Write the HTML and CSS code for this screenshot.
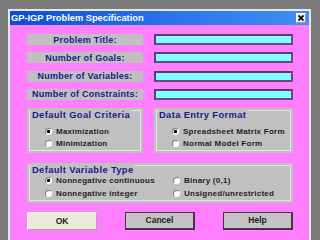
FILE: index.html
```html
<!DOCTYPE html>
<html lang="en">

<head>
    <meta charset="UTF-8">
    <title>GP-IGP Problem Specification</title>
    <link rel="stylesheet" href="styles.css">
</head>

<body>
    <div class="dialog">
        <div class="titlebar">
            <span class="title">GP-IGP Problem Specification</span>
            <button class="close" type="button">
                <svg width="6" height="6" viewBox="0 0 6 6">
                    <path d="M0.5 0.5 L5.5 5.5 M5.5 0.5 L0.5 5.5" stroke="#000" stroke-width="1.8" />
                </svg>
            </button>
        </div>

        <form class="content">
            <div class="fields">
                <label class="caption" for="title">Problem Title:</label>
                <input class="entry" id="title" type="text">

                <label class="caption" for="goals">Number of Goals:</label>
                <input class="entry" id="goals" type="text">

                <label class="caption" for="vars">Number of Variables:</label>
                <input class="entry" id="vars" type="text">

                <label class="caption" for="cons">Number of Constraints:</label>
                <input class="entry" id="cons" type="text">
            </div>

            <div class="groups">
                <fieldset class="group">
                    <legend>Default Goal Criteria</legend>
                    <div class="options">
                        <label class="option"><input type="radio" name="goal" checked> Maximization</label>
                        <label class="option"><input type="radio" name="goal"> Minimization</label>
                    </div>
                </fieldset>

                <fieldset class="group">
                    <legend>Data Entry Format</legend>
                    <div class="options">
                        <label class="option"><input type="radio" name="format" checked> Spreadsheet Matrix Form</label>
                        <label class="option"><input type="radio" name="format"> Normal Model Form</label>
                    </div>
                </fieldset>
            </div>

            <fieldset class="group wide">
                <legend>Default Variable Type</legend>
                <div class="options grid2">
                    <label class="option"><input type="radio" name="vtype" checked> Nonnegative continuous</label>
                    <label class="option"><input type="radio" name="vtype"> Binary (0,1)</label>
                    <label class="option"><input type="radio" name="vtype"> Nonnegative integer</label>
                    <label class="option"><input type="radio" name="vtype"> Unsigned/unrestricted</label>
                </div>
            </fieldset>

            <div class="buttons">
                <button type="submit" class="btn default">OK</button>
                <button type="button" class="btn">Cancel</button>
                <button type="button" class="btn">Help</button>
            </div>
        </form>
    </div>
</body>

</html>
```

FILE: styles.css
```css
html,
body {
    margin: 0;
    height: 240px;
    overflow: hidden;
}

body {
    padding: 9px 0 0 8px;
    background: #7c7c7c;
    font-family: "Liberation Sans", Arial, sans-serif;
    box-sizing: border-box;
}

.dialog {
    width: 303px;
    height: 240px;
    border: 2px solid #e6e6ee;
    border-bottom: none;
    box-sizing: border-box;
    background: #ff80ff;
}

.titlebar {
    height: 14px;
    display: flex;
    align-items: center;
    justify-content: space-between;
    padding: 0 3px 0 1px;
    background: linear-gradient(to right, #0c4cd6, #2f78ec 60%, #3f8ef4);
}

.title {
    color: #fff;
    font-size: 9.3px;
    font-weight: bold;
}

.close {
    width: 10px;
    height: 10px;
    padding: 0;
    margin: 0;
    display: flex;
    align-items: center;
    justify-content: center;
    background: #efeee2;
    border: 1px solid #fff;
    border-right-color: #9a9a9a;
    border-bottom-color: #9a9a9a;
}

.content {
    padding: 9px 16px 0 17px;
}

.fields {
    display: grid;
    grid-template-columns: 116px 139px;
    column-gap: 11px;
    row-gap: 7.3px;
}

.caption {
    height: 11px;
    display: flex;
    align-items: center;
    justify-content: center;
    background: #c0c0c0;
    color: #1a1a8a;
    font-size: 9px;
    letter-spacing: 0.25px;
    font-weight: bold;
}

.entry {
    height: 11px;
    margin: 0;
    padding: 0;
    box-sizing: border-box;
    background: #80ffff;
    border: 2px solid #6a4a7c;
    border-top-color: #5c3c6e;
    border-left-color: #5c3c6e;
}

.groups {
    display: grid;
    grid-template-columns: 116px 139px;
    column-gap: 11px;
    margin-top: 8px;
}

.group {
    position: relative;
    height: 45px;
    margin: 0;
    padding: 0;
    box-sizing: border-box;
    background: #c0c0c0;
    border: none;
    outline: 1px solid #e4e4e4;
    outline-offset: -3px;
    min-width: 0;
}

.group legend {
    position: absolute;
    top: 1px;
    left: 4px;
    padding: 0 1px;
    background: #c0c0c0;
    color: #1a1a8a;
    font-size: 9.4px;
    letter-spacing: 0.35px;
    font-weight: bold;
    line-height: 11px;
}

.group.wide {
    height: 40px;
    margin-top: 10px;
}

.options {
    display: flex;
    flex-direction: column;
    gap: 1px;
    padding: 18px 0 0 18px;
}

.options.grid2 {
    display: grid;
    grid-template-columns: 127px 1fr;
    row-gap: 2px;
    padding-top: 12px;
}

.option {
    display: flex;
    align-items: center;
    height: 11px;
    color: #1e1e1e;
    font-size: 8px;
    letter-spacing: 0.25px;
    font-weight: bold;
    white-space: nowrap;
}

.option input {
    appearance: none;
    width: 7px;
    height: 7px;
    margin: 0 4px 0 0;
    border-radius: 50%;
    background: #fff;
    border: 1px solid #fff;
    border-top-color: #7a7a7a;
    border-left-color: #7a7a7a;
    box-sizing: border-box;
}

.option input:checked {
    background: radial-gradient(circle, #000 1.4px, #fff 1.6px);
}

.buttons {
    display: flex;
    justify-content: space-between;
    margin-top: 9px;
}

.btn {
    width: 70px;
    height: 18px;
    padding: 0;
    font-family: "Liberation Sans", Arial, sans-serif;
    font-size: 8.5px;
    font-weight: bold;
    color: #202020;
    background: #c4c4c4;
    border: 1px solid #4a3050;
    border-right-width: 2px;
    border-bottom-width: 2px;
    box-sizing: border-box;
}

.btn.default {
    background: #ecead8;
    border: 1px solid #f6f4ea;
    border-right-color: #a8a8a0;
    border-bottom-color: #a8a8a0;
}
```
